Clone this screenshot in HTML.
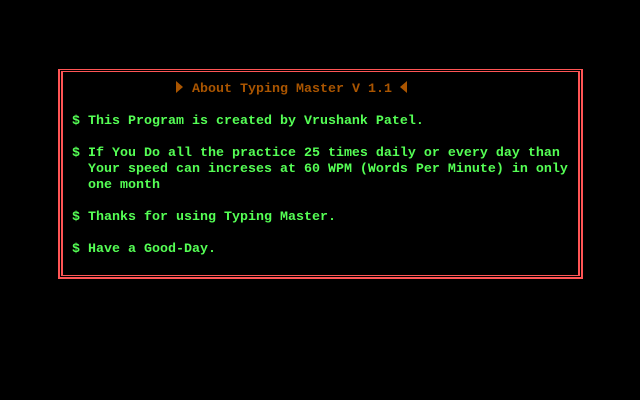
<!DOCTYPE html>
<html><head><style>
html,body{margin:0;padding:0;background:#000;width:640px;height:400px;overflow:hidden}
.b{position:absolute;border-style:solid;border-color:#ff5555}
.t{position:absolute;font-family:"Liberation Mono",monospace;font-size:13.33px;line-height:16px;white-space:pre;font-weight:bold;color:#55ff55;letter-spacing:0}
.tri{position:absolute;width:0;height:0;border-top:6px solid transparent;border-bottom:6px solid transparent}
</style></head><body>
<div class="b" style="left:58px;top:69px;width:521px;height:207px;border-width:1px 2px 2px 2px"></div>
<div class="b" style="left:61px;top:71px;width:515px;height:203px;border-width:1px 2px 1px 2px"></div>
<div class="tri" style="left:176px;top:81px;border-left:7px solid #aa5500"></div>
<div class="t" style="left:192px;top:82px;color:#aa5500">About Typing Master V 1.1</div>
<div class="tri" style="left:400px;top:81px;border-right:7px solid #aa5500"></div>
<div class="t" style="left:72px;top:114px">$ This Program is created by Vrushank Patel.</div>
<div class="t" style="left:72px;top:146px">$ If You Do all the practice 25 times daily or every day than
  Your speed can increses at 60 WPM (Words Per Minute) in only
  one month</div>
<div class="t" style="left:72px;top:210px">$ Thanks for using Typing Master.</div>
<div class="t" style="left:72px;top:242px">$ Have a Good-Day.</div>
</body></html>
